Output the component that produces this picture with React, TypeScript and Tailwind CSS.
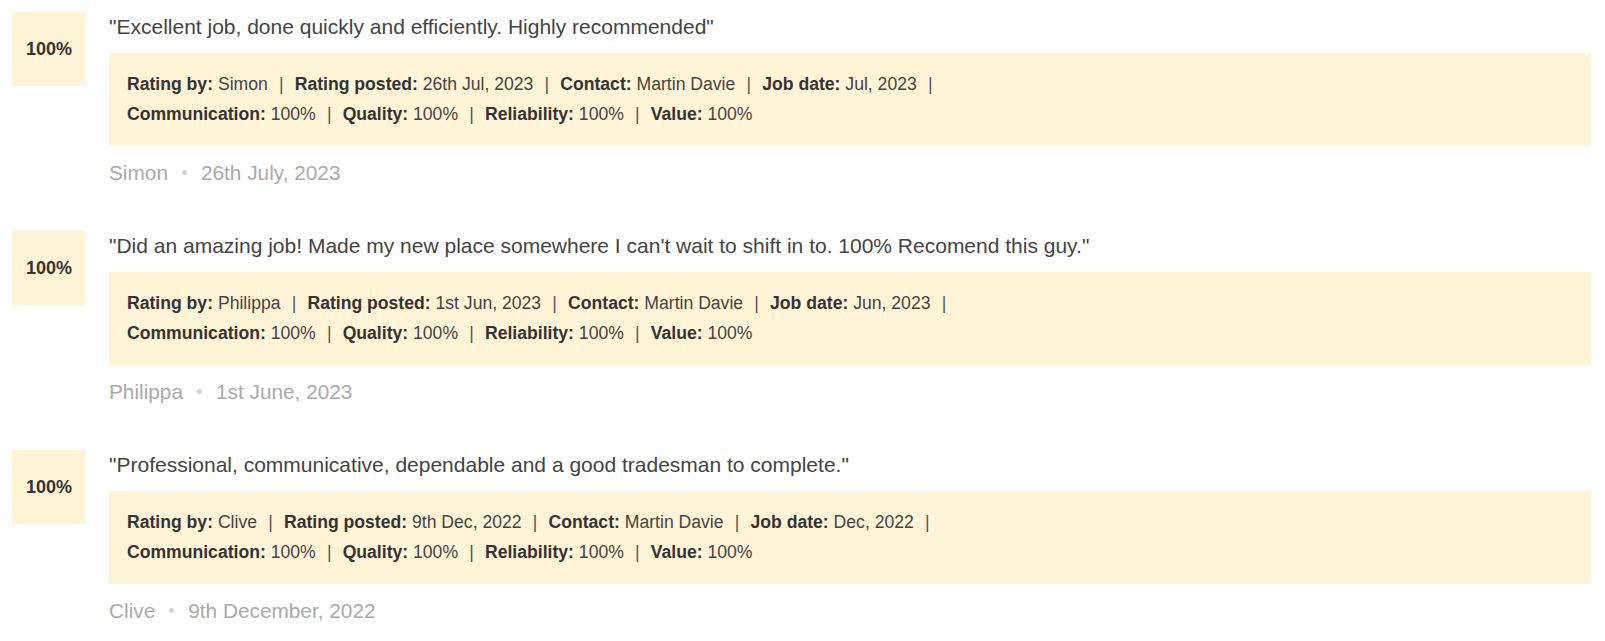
import React from "react";

type Review = {
  quote: string;
  by: string;
  posted: string;
  jobDate: string;
  footerDate: string;
};

const reviews: Review[] = [
  {
    quote: "\"Excellent job, done quickly and efficiently. Highly recommended\"",
    by: "Simon",
    posted: "26th Jul, 2023",
    jobDate: "Jul, 2023",
    footerDate: "26th July, 2023",
  },
  {
    quote:
      "\"Did an amazing job! Made my new place somewhere I can't wait to shift in to. 100% Recomend this guy.\"",
    by: "Philippa",
    posted: "1st Jun, 2023",
    jobDate: "Jun, 2023",
    footerDate: "1st June, 2023",
  },
  {
    quote: "\"Professional, communicative, dependable and a good tradesman to complete.\"",
    by: "Clive",
    posted: "9th Dec, 2022",
    jobDate: "Dec, 2022",
    footerDate: "9th December, 2022",
  },
];

function Sep() {
  return <span className="mx-[11.2px] text-[#555]">|</span>;
}

function Field({ label, value }: { label: string; value: string }) {
  return (
    <>
      <span className="font-bold text-[#333]">{label}</span>
      <span className="text-[#444]"> {value}</span>
    </>
  );
}

function Entry({ r }: { r: Review }) {
  return (
    <div className="flex pl-[12px] pr-[14px] mb-[43px]">
      <div className="w-[74px] h-[74px] shrink-0 bg-[#fff4d6] flex items-center justify-center font-bold text-[18px] text-[#333] pt-[1px]">
        100%
      </div>
      <div className="ml-[23px] flex-1 min-w-0">
        <p className="text-[21px] leading-[30px] text-[#444]">{r.quote}</p>
        <div className="mt-[11px] bg-[#fff4d6] pl-[18px] pt-[16px] pb-[17px] text-[17.6px] leading-[30px] whitespace-nowrap">
          <div>
            <Field label="Rating by:" value={r.by} />
            <Sep />
            <Field label="Rating posted:" value={r.posted} />
            <Sep />
            <Field label="Contact:" value="Martin Davie" />
            <Sep />
            <Field label="Job date:" value={r.jobDate} />
            <Sep />
          </div>
          <div>
            <Field label="Communication:" value="100%" />
            <Sep />
            <Field label="Quality:" value="100%" />
            <Sep />
            <Field label="Reliability:" value="100%" />
            <Sep />
            <Field label="Value:" value="100%" />
          </div>
        </div>
        <div className="mt-[12px] text-[20.8px] leading-[30px] text-[#aaa] flex items-center">
          <span>{r.by}</span>
          <span className="mx-[14px] w-[5px] h-[5px] rounded-full bg-[#d4d4d4] inline-block"></span>
          <span>{r.footerDate}</span>
        </div>
      </div>
    </div>
  );
}

export default function App() {
  return (
    <div
      className="w-[1605px] min-h-[641px] bg-white pt-[11.5px]"
      style={{ fontFamily: '"Liberation Sans", Arial, sans-serif' }}
    >
      {reviews.map((r, i) => (
        <Entry key={i} r={r} />
      ))}
    </div>
  );
}
